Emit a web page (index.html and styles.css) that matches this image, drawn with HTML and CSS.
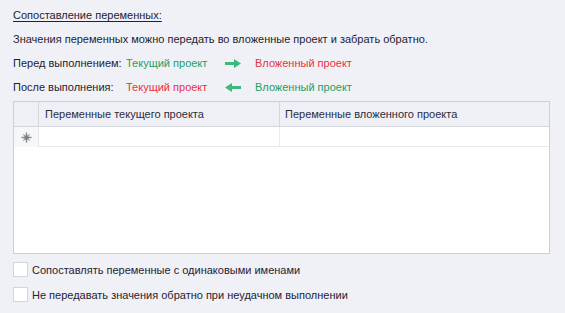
FILE: index.html
```html
<!DOCTYPE html>
<html lang="ru">
<head>
  <meta charset="UTF-8">
  <title>Сопоставление переменных</title>
  <link rel="stylesheet" href="styles.css">
</head>
<body>
  <div class="panel">
    <div class="line title">Сопоставление переменных:</div>
    <div class="line">Значения переменных можно передать во вложенные проект и забрать обратно.</div>

    <div class="line flow">
      <span>Перед выполнением:</span>
      <span class="green">Текущий проект</span>
      <svg class="arrow" width="16" height="9" viewBox="0 0 16 9">
        <path d="M0 3h9V0l7 4.5-7 4.5V6H0z"/>
      </svg>
      <span class="red">Вложенный проект</span>
    </div>
    <div class="line flow">
      <span>После выполнения:</span>
      <span class="red">Текущий проект</span>
      <svg class="arrow" width="16" height="9" viewBox="0 0 16 9">
        <path d="M16 3H7V0L0 4.5 7 9V6h9z"/>
      </svg>
      <span class="green">Вложенный проект</span>
    </div>

    <div class="grid">
      <div class="grid-head">
        <div class="cell corner"></div>
        <div class="cell">Переменные текущего проекта</div>
        <div class="cell">Переменные вложенного проекта</div>
      </div>
      <div class="grid-row">
        <div class="cell marker">
          <svg width="11" height="11" viewBox="0 0 11 11">
            <g stroke="#8b8d95" stroke-width="1.4" stroke-linecap="round">
              <path d="M5.5 1v9M1 5.5h9"/>
              <path d="M2.6 2.6l5.8 5.8M8.4 2.6l-5.8 5.8" stroke-width="1.1" opacity="0.8"/>
            </g>
            <circle cx="5.5" cy="5.5" r="2.2" fill="#7e8088"/>
          </svg>
        </div>
        <div class="cell"></div>
        <div class="cell"></div>
      </div>
    </div>

    <label class="check"><span class="box"></span>Сопоставлять переменные с одинаковыми именами</label>
    <label class="check"><span class="box"></span>Не передавать значения обратно при неудачном выполнении</label>
  </div>
</body>
</html>
```

FILE: styles.css
```css
body {
  margin: 0;
  background-color: #f0f1f6;
  font-family: Tahoma, "Liberation Sans", Arial, sans-serif;
  font-size: 11px;
  color: #1f2233;
}

.panel {
  width: 537px;
  padding: 3px 13px 0;
}

.line {
  height: 24px;
  line-height: 24px;
  white-space: nowrap;
}

.title {
  text-decoration: underline;
  text-underline-offset: 2px;
}

.flow {
  display: grid;
  grid-template-columns: 113px 99px 16px auto;
  column-gap: 0;
  align-items: center;
}

.flow .arrow {
  fill: #3cb97b;
}

.flow span:last-child {
  padding-left: 14px;
}

.green {
  color: #1e9e62;
}

.red {
  color: #e8313f;
}

.grid {
  margin-top: 2px;
  height: 151px;
  border: 1px solid #cdcfd8;
  background-color: #fff;
}

.grid-head,
.grid-row {
  display: grid;
  grid-template-columns: 25px 241px 1fr;
}

.grid-head {
  height: 24px;
  background-color: #eff0f5;
  border-bottom: 1px solid #d4d6de;
}

.grid-head .cell {
  border-right: 1px solid #d4d6de;
  line-height: 24px;
  padding-left: 6px;
  color: #2a2d3d;
}

.grid-head .cell.corner {
  padding: 0;
}

.grid-head .cell:last-child {
  border-right: none;
  padding-left: 5px;
}

.grid-row {
  height: 20px;
}

.grid-row .cell {
  border-right: 1px solid #e9eaee;
  border-bottom: 1px solid #e9eaee;
}

.grid-row .cell:last-child {
  border-right: none;
}

.grid-row .marker {
  background-color: #f6f7f9;
  border-bottom: none;
  border-right: 1px solid #e4e5ea;
  display: flex;
  align-items: center;
  justify-content: center;
}

.check {
  display: flex;
  align-items: center;
  height: 25px;
  gap: 4px;
}

.check:first-of-type {
  margin-top: 3px;
}

.box {
  width: 13px;
  height: 13px;
  border: 1px solid #d3d5dd;
  background-color: #fff;
}
```
